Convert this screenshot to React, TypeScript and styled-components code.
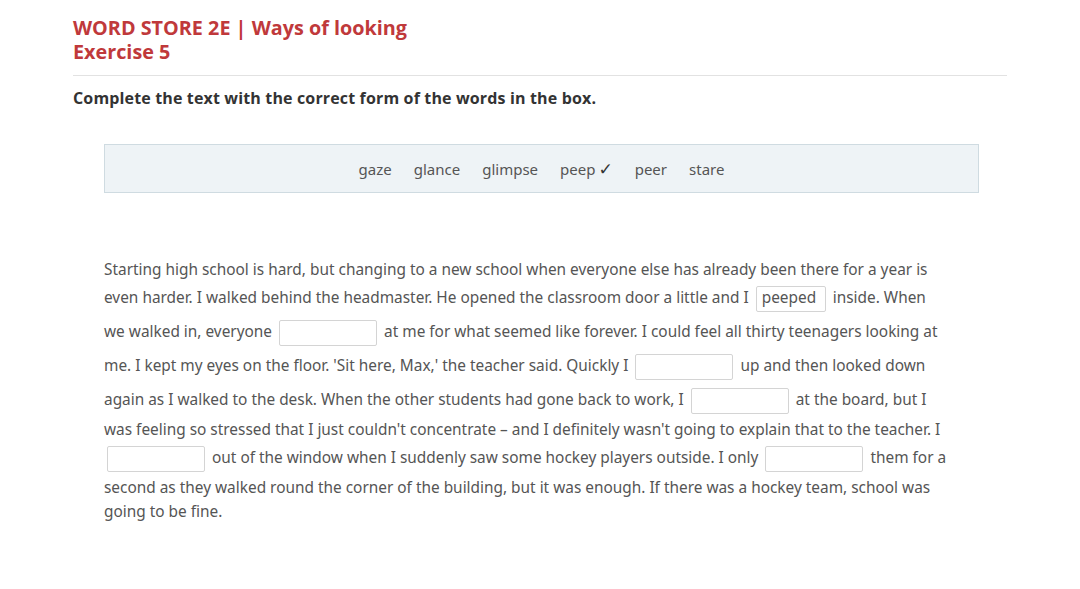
import styled, { createGlobalStyle } from 'styled-components';

const GlobalStyle = createGlobalStyle`
  html, body { margin: 0; padding: 0; background: #fff; }
  body { font-family: "Noto Sans", "Open Sans", sans-serif; color: #444; }
`;

const Page = styled.div`
  padding: 16px 73px 40px;
  width: 934px;
`;

const Header = styled.header`
  padding-bottom: 11px;
  border-bottom: 1px solid #e2e2e2;
`;

const Title = styled.h1`
  margin: 0;
  font-family: "Open Sans", "Noto Sans", sans-serif;
  font-size: 19.8px;
  line-height: 24px;
  font-weight: 700;
  color: #c0393b;
`;

const Instruction = styled.p`
  margin: 11px 0 0;
  font-family: "Open Sans", "Noto Sans", sans-serif;
  font-size: 16px;
  letter-spacing: 0.15px;
  line-height: 22px;
  font-weight: 700;
  color: #333;
`;

const WordBox = styled.div`
  margin: 35px 28px 0 31px;
  height: 47px;
  background: #eef3f6;
  border: 1px solid #cfdbe1;
  display: flex;
  align-items: center;
  justify-content: center;
  gap: 22px;
  font-size: 15px;
  color: #555;
`;

const Word = styled.span`
  white-space: nowrap;
`;

const Tick = styled.span`
  margin-left: 3px;
  font-family: "DejaVu Sans", sans-serif;
  font-size: 17px;
  color: #333;
`;

const Text = styled.div`
  margin: 65px 0 0 31px;
  width: 880px;
  font-size: 15.4px;
  line-height: 24px;
  color: #555;
`;

const Gap = styled.input<{ $filled?: boolean }>`
  box-sizing: border-box;
  width: ${({ $filled }) => ($filled ? '70px' : '98px')};
  height: 26px;
  margin: 4px 3px;
  padding: 0 5px 3px;
  vertical-align: middle;
  border: 1px solid #d4d4d4;
  border-radius: 2px;
  font-family: "Noto Sans", "Open Sans", sans-serif;
  font-size: 15.4px;
  font-weight: 400;
  color: #555;
  background: #fff;
  outline: none;
`;

const words = [
  { text: 'gaze' },
  { text: 'glance' },
  { text: 'glimpse' },
  { text: 'peep', done: true },
  { text: 'peer' },
  { text: 'stare' },
];

export default function App() {
  return (
    <>
      <GlobalStyle />
      <Page>
        <Header>
          <Title>WORD STORE 2E | Ways of looking</Title>
          <Title>Exercise 5</Title>
        </Header>
        <Instruction>Complete the text with the correct form of the words in the box.</Instruction>
        <WordBox>
          {words.map((w) => (
            <Word key={w.text}>
              {w.text}
              {w.done ? <Tick>✓</Tick> : null}
            </Word>
          ))}
        </WordBox>
        <Text>
          Starting high school is hard, but changing to a new school when everyone else has already been
          there for a year is
          <br />
          even harder. I walked behind the headmaster. He opened the classroom door a little and I{' '}
          <Gap $filled defaultValue="peeped" readOnly /> inside. When
          <br />
          we walked in, everyone <Gap /> at me for what seemed like forever. I could feel all thirty
          teenagers looking at
          <br />
          me. I kept my eyes on the floor. 'Sit here, Max,' the teacher said. Quickly I <Gap /> up and
          then looked down
          <br />
          again as I walked to the desk. When the other students had gone back to work, I <Gap /> at the
          board, but I
          <br />
          was feeling so stressed that I just couldn't concentrate – and I definitely wasn't going to
          explain that to the teacher. I
          <br />
          <Gap /> out of the window when I suddenly saw some hockey players outside. I only <Gap /> them
          for a
          <br />
          second as they walked round the corner of the building, but it was enough. If there was a hockey
          team, school was
          <br />
          going to be fine.
        </Text>
      </Page>
    </>
  );
}
